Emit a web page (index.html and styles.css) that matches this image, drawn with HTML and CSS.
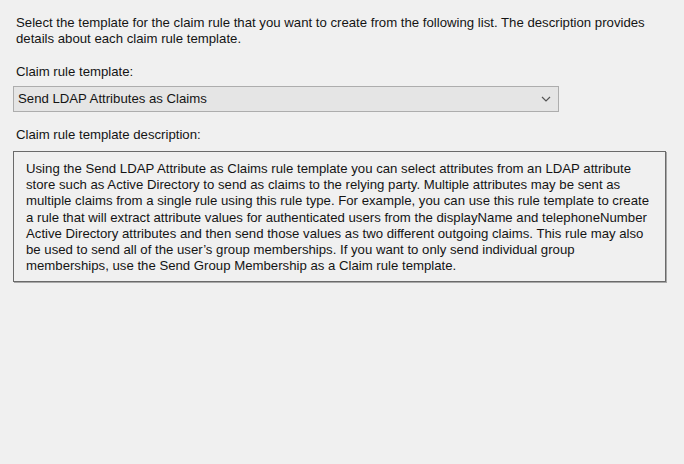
FILE: index.html
```html
<!DOCTYPE html>
<html>
<head>
<meta charset="utf-8">
<link rel="stylesheet" href="styles.css">
</head>
<body>
<div class="page">
  <p class="intro">Select the template for the claim rule that you want to create from the following list. The description provides<br>details about each claim rule template.</p>
  <div class="label label-template">Claim rule template:</div>
  <div class="select">
    <span class="select-text">Send LDAP Attributes as Claims</span>
    <svg class="chevron" width="10" height="6" viewBox="0 0 10 6"><path d="M1 1 L5 5 L9 1" fill="none" stroke="#555" stroke-width="1.2"/></svg>
  </div>
  <div class="label label-desc">Claim rule template description:</div>
  <div class="desc">Using the Send LDAP Attribute as Claims rule template you can select attributes from an LDAP attribute<br>store such as Active Directory to send as claims to the relying party. Multiple attributes may be sent as<br>multiple claims from a single rule using this rule type. For example, you can use this rule template to create<br>a rule that will extract attribute values for authenticated users from the displayName and telephoneNumber<br>Active Directory attributes and then send those values as two different outgoing claims. This rule may also<br>be used to send all of the user’s group memberships. If you want to only send individual group<br>memberships, use the Send Group Membership as a Claim rule template.</div>
</div>
</body>
</html>
```

FILE: styles.css
```css
html, body {
  margin: 0;
  padding: 0;
  background: #f0f0f0;
}
body {
  font-family: "Liberation Sans", Arial, sans-serif;
  font-size: 13.2px;
  color: #141414;
  width: 684px;
  height: 464px;
  overflow: hidden;
}
.page {
  padding: 15px 0 0 16px;
}
.intro {
  margin: 0;
  line-height: 16px;
}
.label {
  line-height: 16px;
}
.label-template {
  margin-top: 17px;
}
.select {
  margin: 6px 0 0 -3px;
  border: 1px solid #adadad;
  background: #e5e5e5;
  display: flex;
  align-items: center;
  justify-content: space-between;
  padding: 0 7px 0 4px;
  box-sizing: border-box;
  width: 546px;
  height: 26px;
  line-height: 16px;
}
.chevron {
  display: block;
}
.label-desc {
  margin-top: 15px;
}
.desc {
  margin: 8px 0 0 -3px;
  width: 653px;
  height: 131px;
  box-sizing: border-box;
  border: 1px solid #6a6a6a;
  box-shadow: 1px 1px 0 #a8a8a8;
  padding: 9px 0 0 12px;
  line-height: 16.2px;
}
```
